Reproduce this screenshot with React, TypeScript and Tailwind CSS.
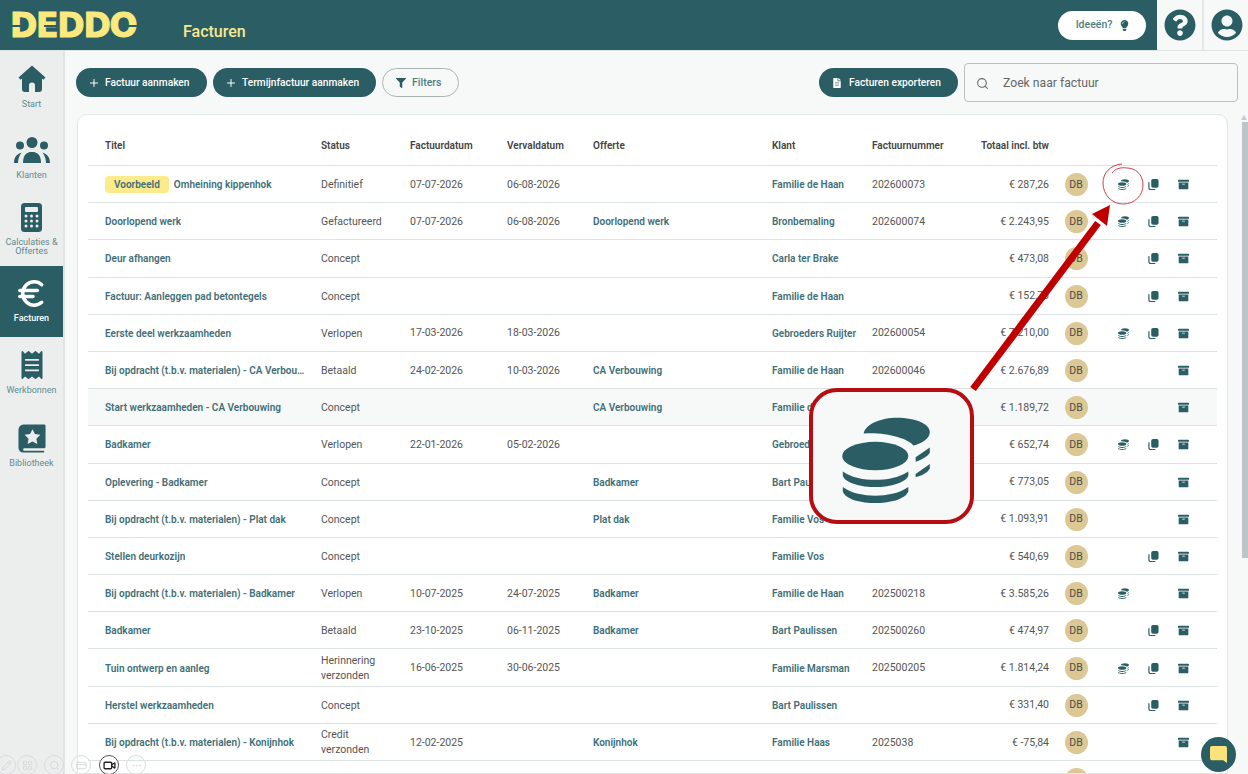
import { FaArchive, FaFileAlt, FaFilter, FaLightbulb, FaQuestionCircle, FaReceipt, FaUserCircle } from "react-icons/fa";
import { CreditCard, Euro, LayoutGrid, MoreHorizontal, Pencil, Plus, Search, Video } from "lucide-react";

interface Invoice {
  title: string;
  tag?: string;
  status: string;
  invoiceDate?: string;
  dueDate?: string;
  quote?: string;
  client: string;
  number?: string;
  total: string;
  coins?: boolean;
  copy?: boolean;
  hover?: boolean;
}

const invoices: Invoice[] = [
  { tag: "Voorbeeld", title: "Omheining kippenhok", status: "Definitief", invoiceDate: "07-07-2026", dueDate: "06-08-2026", client: "Familie de Haan", number: "202600073", total: "€ 287,26", coins: true, copy: true },
  { title: "Doorlopend werk", status: "Gefactureerd", invoiceDate: "07-07-2026", dueDate: "06-08-2026", quote: "Doorlopend werk", client: "Bronbemaling", number: "202600074", total: "€ 2.243,95", coins: true, copy: true },
  { title: "Deur afhangen", status: "Concept", client: "Carla ter Brake", total: "€ 473,08", copy: true },
  { title: "Factuur: Aanleggen pad betontegels", status: "Concept", client: "Familie de Haan", total: "€ 152,70", copy: true },
  { title: "Eerste deel werkzaamheden", status: "Verlopen", invoiceDate: "17-03-2026", dueDate: "18-03-2026", client: "Gebroeders Ruijter", number: "202600054", total: "€ 7.210,00", coins: true, copy: true },
  { title: "Bij opdracht (t.b.v. materialen) - CA Verbouwing", status: "Betaald", invoiceDate: "24-02-2026", dueDate: "10-03-2026", quote: "CA Verbouwing", client: "Familie de Haan", number: "202600046", total: "€ 2.676,89" },
  { title: "Start werkzaamheden - CA Verbouwing", status: "Concept", quote: "CA Verbouwing", client: "Familie de Haan", total: "€ 1.189,72", hover: true },
  { title: "Badkamer", status: "Verlopen", invoiceDate: "22-01-2026", dueDate: "05-02-2026", client: "Gebroeders Ruijter", total: "€ 652,74", coins: true, copy: true },
  { title: "Oplevering - Badkamer", status: "Concept", quote: "Badkamer", client: "Bart Paulissen", total: "€ 773,05" },
  { title: "Bij opdracht (t.b.v. materialen) - Plat dak", status: "Concept", quote: "Plat dak", client: "Familie Vos", total: "€ 1.093,91" },
  { title: "Stellen deurkozijn", status: "Concept", client: "Familie Vos", total: "€ 540,69", copy: true },
  { title: "Bij opdracht (t.b.v. materialen) - Badkamer", status: "Verlopen", invoiceDate: "10-07-2025", dueDate: "24-07-2025", quote: "Badkamer", client: "Familie de Haan", number: "202500218", total: "€ 3.585,26", coins: true },
  { title: "Badkamer", status: "Betaald", invoiceDate: "23-10-2025", dueDate: "06-11-2025", quote: "Badkamer", client: "Bart Paulissen", number: "202500260", total: "€ 474,97", copy: true },
  { title: "Tuin ontwerp en aanleg", status: "Herinnering verzonden", invoiceDate: "16-06-2025", dueDate: "30-06-2025", client: "Familie Marsman", number: "202500205", total: "€ 1.814,24", coins: true, copy: true },
  { title: "Herstel werkzaamheden", status: "Concept", client: "Bart Paulissen", total: "€ 331,40", copy: true },
  { title: "Bij opdracht (t.b.v. materialen) - Konijnhok", status: "Credit verzonden", invoiceDate: "12-02-2025", quote: "Konijnhok", client: "Familie Haas", number: "2025038", total: "€ -75,84" },
  { title: "", status: "", client: "", total: "" },
];

const cols = "grid grid-cols-[233px_89px_97px_86px_179px_100px_100px_77px_54px_40px_20px_40px_14px] items-center";

const HomeIcon = () => (
  <svg viewBox="0 0 28 27" className="w-[28px] h-[27px] fill-[#2a5d64]">
    <path d="M14 .5l13.500 12-2 2.200-1.500-1.200V24a3 3 0 0 1-3 3H7a3 3 0 0 1-3-3V13.500l-1.500 1.200-2-2.200z" />
    <path d="M11 27v-6.500a3 3 0 0 1 6 0V27z" fill="#eceeee" />
  </svg>
);

const UsersIcon = () => (
  <svg viewBox="0 0 36 27" className="w-[36px] h-[27px] fill-[#2a5d64]">
    <circle cx="18" cy="5.500" r="5.500" />
    <circle cx="6" cy="8.500" r="4" />
    <circle cx="30" cy="8.500" r="4" />
    <path d="M9 26c0-8.500 4-11 9-11s9 2.500 9 11z" />
    <path d="M0 26c0-6 3-9 7.500-10.500-2 3-3.500 6-3.500 10.500z" />
    <path d="M36 26c0-6-3-9-7.500-10.500 2 3 3.500 6 3.500 10.500z" />
  </svg>
);

const CalculatorIcon = () => (
  <svg viewBox="0 0 21 29" className="w-[21px] h-[29px] fill-[#2a5d64]">
    <rect width="21" height="29" rx="3.500" />
    <rect x="4" y="4" width="13" height="5" rx="1" fill="#eceeee" />
    {[5, 10.5, 16].map((x) =>
      [13, 18, 23].map((y) => <circle key={`${x}-${y}`} cx={x} cy={y} r="1.500" fill="#eceeee" />)
    )}
  </svg>
);

// Book with a star, not available in the icon sets
const LibraryIcon = () => (
  <svg viewBox="0 0 30 30" className="w-[28px] h-[29px] fill-[#2a5d64]">
    <path d="M6 0h22a1.500 1.500 0 0 1 1.500 1.500V24a1.500 1.500 0 0 1-1.500 1.500H6a2 2 0 0 0 0 2.500h22v2H5.500A5 5 0 0 1 .5 25V5.500A5.500 5.500 0 0 1 6 0z" />
    <path d="M15.500 5l2.600 5.300 5.800.8-4.200 4.100 1 5.800-5.200-2.700-5.200 2.700 1-5.800-4.200-4.100 5.800-.8z" fill="#eceeee" />
  </svg>
);

const CoinsIcon = ({ className }: { className: string }) => (
  <svg viewBox="0 0 265 260" className={`fill-[#2a5d64] ${className}`}>
    <path d="M65 50C70 20 120 2 165 2c60 0 100 20 100 43 0 20-25 35-50 41-15-21-85-41-150-36z" />
    <ellipse cx="100" cy="118" rx="100" ry="43" />
    <path d="M2 165c28 20 63 25 98 25s70-5 100-25v13c-10 22-60 34-100 34S10 200 2 178z" />
    <path d="M2 212c28 20 63 26 98 26s70-6 100-26v13c-10 25-60 35-100 35S10 250 2 225z" />
    <path d="M222 122l43-30v16c-5 10-25 22-43 27z" />
    <path d="M222 172l43-30v13c-5 13-25 23-43 27z" />
  </svg>
);

const CopyIcon = () => (
  <svg viewBox="0 0 12 12" className="w-[11px] h-[11px]">
    <rect x="3.500" y="0" width="8" height="9.500" rx="2" className="fill-[#2a5d64]" />
    <path d="M1 3.500v6a2 2 0 0 0 2 2h5" fill="none" stroke="#2a5d64" strokeWidth="1.300" />
  </svg>
);

const navItems = [
  { label: "Start", icon: <HomeIcon /> },
  { label: "Klanten", icon: <UsersIcon /> },
  { label: "Calculaties & Offertes", icon: <CalculatorIcon /> },
  { label: "Facturen", icon: <Euro size={35} strokeWidth={2.4} />, active: true },
  { label: "Werkbonnen", icon: <FaReceipt size={28} /> },
  { label: "Bibliotheek", icon: <LibraryIcon />, tall: true },
];

const toolbar = [
  { left: "left-[-4px]", icon: <Pencil size={11} /> },
  { left: "left-[17px]", icon: <LayoutGrid size={11} /> },
  { left: "left-[44px]", icon: <Search size={11} /> },
  { left: "left-[71px]", icon: <CreditCard size={11} /> },
  { left: "left-[99px]", icon: <Video size={13} strokeWidth={2.5} />, active: true },
  { left: "left-[126px]", icon: <MoreHorizontal size={11} /> },
];

const App = () => {
  return (
    <div className="relative h-screen flex flex-col overflow-hidden bg-[#f7f9f9] font-['Roboto',sans-serif]">
      <header className="h-[51px] shrink-0 flex border-b border-[#dfe5e5]">
        <div className="flex-1 flex items-center bg-[#2a5d64] pl-[11px] pr-[11px]">
          <div className="relative w-[126px] h-[26px] mt-[1px]">
            <span className="block -ml-[1px] font-['DejaVu_Sans',sans-serif] font-bold text-[33px] leading-[26px] tracking-[-1.300px] text-[#fbe97e] [-webkit-text-stroke:1px_#fbe97e]">DEDDO</span>
            <span className="absolute -left-[2px] top-[12px] w-[15px] h-[2px] bg-[#2a5d64]" />
            <span className="absolute left-[33px] top-[12px] w-[13px] h-[2px] bg-[#2a5d64]" />
            <span className="absolute left-[116px] top-[12px] w-[12px] h-[2px] bg-[#2a5d64]" />
          </div>
          <h1 className="ml-[46px] mt-[13px] text-[16px] font-medium text-[#f8e98c]">Facturen</h1>
          <button className="ml-auto w-[88px] h-[29px] rounded-full bg-white flex items-center justify-center gap-[7px] pl-[2px] text-[10.500px] font-medium text-[#4d7d85]">
            Ideeën?
            <FaLightbulb size={11} className="text-[#2a5d64]" />
          </button>
        </div>
        <div className="w-[47px] flex items-center justify-center border-r-2 border-[#e4e8e8]">
          <FaQuestionCircle size={32} className="text-[#2a5d64]" />
        </div>
        <div className="w-[44px] pl-[2px] flex items-center justify-center">
          <FaUserCircle size={32} className="text-[#2a5d64]" />
        </div>
      </header>

      <div className="flex-1 flex min-h-0">
        <nav className="w-[65px] shrink-0 bg-[#eceeee] border-r-2 border-[#e0e4e4]">
          {navItems.map((item) => (
            <div
              key={item.label}
              className={`${item.tall ? "h-[75px]" : "h-[71.500px]"} pb-[2px] flex flex-col items-center justify-center gap-[5px] text-center ${
                item.active ? "bg-[#2a5d64] text-white" : "text-[#2a5d64]"
              }`}
            >
              <div className="h-[32px] flex items-center">{item.icon}</div>
              <span className={`text-[9px] leading-[9px] ${item.active ? "font-medium text-white" : "text-[#5f8a90]"}`}>{item.label}</span>
            </div>
          ))}
        </nav>

        <main className="flex-1 min-w-0 pl-[11px] pr-[2px] pt-[12px] flex flex-col gap-[12px]">
          <div className="flex items-center h-[39px] shrink-0">
            <button className="w-[131px] h-[29px] rounded-full bg-[#2a5d64] text-white text-[10.200px] font-medium flex items-center pl-[12px] gap-[5px]">
              <Plus size={12} strokeWidth={2} />
              Factuur aanmaken
            </button>
            <button className="ml-[6px] w-[163px] h-[29px] rounded-full bg-[#2a5d64] text-white text-[10.200px] font-medium flex items-center pl-[12px] gap-[5px]">
              <Plus size={12} strokeWidth={2} />
              Termijnfactuur aanmaken
            </button>
            <button className="ml-[6px] w-[77px] h-[29px] rounded-full border border-[#a9b5b5] text-[#4d7d85] text-[10.500px] font-medium flex items-center pl-[13px] gap-[6px]">
              <FaFilter size={10} className="text-[#2a5d64]" />
              Filters
            </button>
            <button className="ml-auto w-[139px] h-[29px] rounded-full bg-[#2a5d64] text-white text-[10.200px] font-medium flex items-center pl-[13px] gap-[7px]">
              <FaFileAlt size={10} />
              Facturen exporteren
            </button>
            <div className="ml-[6px] w-[274px] h-[39px] pt-[2px] rounded border border-[#b9c0c0] flex items-center pl-[11px] gap-[14px] text-[12.200px] text-[#666]">
              <Search size={13} className="text-[#666]" />
              Zoek naar factuur
            </div>
          </div>

          <section className="flex-1 min-h-0 overflow-hidden ml-[1px] w-[1151px] bg-white border border-[#e3e7e7] rounded-t-[10px] px-[10px]">
            <div className={`${cols} h-[51px] pt-[11px] border-b border-[#dde3e3] text-[10px] font-semibold text-[#444]`}>
              <span className="pl-[17px]">Titel</span>
              <span>Status</span>
              <span>Factuurdatum</span>
              <span>Vervaldatum</span>
              <span>Offerte</span>
              <span>Klant</span>
              <span>Factuurnummer</span>
              <span className="text-right whitespace-nowrap justify-self-end">Totaal incl. btw</span>
            </div>
            {invoices.map((row, i) => (
              <div key={i} className={`${cols} h-[37.200px] pt-[1px] border-b border-[#dde3e3] text-[10.500px] text-[#555] ${row.hover ? "bg-[#f7f9f9]" : ""}`}>
                <div className="pl-[17px] flex items-center gap-[5px] min-w-0 pr-[14px] font-semibold text-[10px] text-[#3f6f78]">
                  {row.tag && <span className="h-[17px] px-[9px] rounded bg-[#fbeb8b] flex items-center text-[#3f6f78]">{row.tag}</span>}
                  <span className="truncate">{row.title}</span>
                </div>
                <span className="leading-[15px] pr-[24px]">{row.status}</span>
                <span>{row.invoiceDate}</span>
                <span>{row.dueDate}</span>
                <span className="font-semibold text-[10px] text-[#3f6f78]">{row.quote}</span>
                <span className="font-semibold text-[10px] text-[#3f6f78] whitespace-nowrap">{row.client}</span>
                <span>{row.number}</span>
                <span className="text-right whitespace-nowrap">{row.total}</span>
                <span className="justify-self-center w-[23px] h-[23px] rounded-full bg-[#dcc894] flex items-center justify-center text-[#4c4c4c]">DB</span>
                <span className="justify-self-center">{row.coins && <CoinsIcon className="w-[11px] h-[11px]" />}</span>
                <span className="justify-self-center">{row.copy && <CopyIcon />}</span>
                <span className="justify-self-center text-[#2a5d64]">{row.title && <FaArchive size={11} />}</span>
                <span />
              </div>
            ))}
          </section>
        </main>

        <div className="w-[8px] shrink-0 flex flex-col items-end pt-[64px]">
          <div className="mr-[1px] w-0 h-0 border-x-[3px] border-x-transparent border-b-[5px] border-b-[#c3cbcc]" />
          <div className="w-[6px] h-[436px] mt-[2px] bg-[#bcc5c7]" />
        </div>
      </div>

      {/* Annotations on top of the screenshot */}
      <svg className="absolute left-0 top-0 w-[1248px] h-[774px] pointer-events-none" viewBox="0 0 1248 774" fill="none">
        <path d="M1122 164c-12 1-19 9-19 19 0 12 9 21 20 21 12 0 20-9 20-19 0-11-8-17-16-17-7-1-12 1-15 5" stroke="#d5404f" strokeWidth="1" />
        <path d="M973 389l125-166" stroke="#c00000" strokeWidth="7" />
        <path d="M1110 205l-18 9 15 12z" fill="#c00000" />
      </svg>
      <div className="absolute left-[809px] top-[388px] w-[165px] h-[136px] rounded-[28px] border-[4px] border-[#b70d12] bg-[#f7f9f9] flex items-center justify-center pr-[11px] pt-[8px]">
        <CoinsIcon className="w-[88px] h-[86px]" />
      </div>

      {/* Recorder toolbar */}
      {toolbar.map((item) => (
        <div
          key={item.left}
          className={`absolute ${item.left} top-[755px] w-[20px] h-[20px] rounded-full border flex items-center justify-center ${
            item.active ? "border-[#555] bg-white text-[#222]" : "border-[#d9dddd] text-[#d5d9d9]"
          }`}
        >
          {item.icon}
        </div>
      ))}

      {/* Chat bubble */}
      <div className="absolute left-[1201px] top-[737px] w-[35px] h-[35px] rounded-full bg-[#2a5d64] flex items-center justify-center">
        <svg viewBox="0 0 18 18" className="w-[17px] h-[17px] fill-[#fbe27a]">
          <path d="M2 0h14a2 2 0 0 1 2 2v16l-4-3H2a2 2 0 0 1-2-2V2a2 2 0 0 1 2-2z" />
        </svg>
      </div>
    </div>
  );
};

export default App;
